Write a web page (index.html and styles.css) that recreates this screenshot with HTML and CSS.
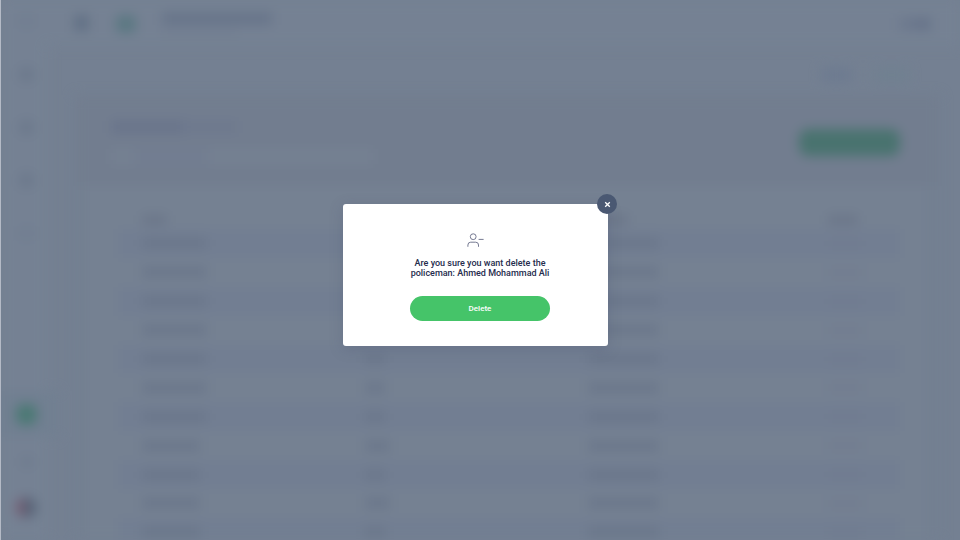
FILE: index.html
```
<!DOCTYPE html>
<html lang="en">
<head>
<meta charset="utf-8">
<title>Delete policeman</title>
<link rel="stylesheet" href="styles.css">
</head>
<body>
<div class="app" aria-hidden="true">
  <aside class="sidebar">
    <i class="dot faint"></i><i class="dot"></i><i class="dot"></i><i class="dot"></i><i class="dot faint"></i>
    <div class="active"><i class="dot green"></i></div>
    <i class="dot small"></i>
    <i class="avatar"></i>
  </aside>
  <main class="main">
    <header class="header">
      <i class="menu"></i><i class="logo"></i>
      <div class="brand"><i class="brand-name"></i><i class="brand-sub"></i></div>
      <i class="user"></i>
    </header>
    <div class="tabs"><i class="tab"></i><i class="tab pale"></i></div>
    <section class="panel">
      <div class="toolbar">
        <div class="heading"><i class="title"></i><i class="search"></i></div>
        <i class="add"></i>
      </div>
      <div class="card">
        <div class="row head"><i class="w25"></i><i class="w20"></i><i class="w40"></i><i class="w30"></i></div>
        <div class="row alt"><i class="w65"></i><i class="w20"></i><i class="w70"></i><i class="link"></i></div>
        <div class="row"><i class="w65"></i><i class="w20"></i><i class="w70"></i><i class="link"></i></div>
        <div class="row alt"><i class="w65"></i><i class="w20"></i><i class="w70"></i><i class="link"></i></div>
        <div class="row"><i class="w65"></i><i class="w20"></i><i class="w70"></i><i class="link"></i></div>
        <div class="row alt"><i class="w65"></i><i class="w20"></i><i class="w70"></i><i class="link"></i></div>
        <div class="row"><i class="w65"></i><i class="w20"></i><i class="w70"></i><i class="link"></i></div>
        <div class="row alt"><i class="w65"></i><i class="w20"></i><i class="w70"></i><i class="link"></i></div>
        <div class="row"><i class="w58"></i><i class="w25"></i><i class="w70"></i><i class="link"></i></div>
        <div class="row alt"><i class="w58"></i><i class="w20"></i><i class="w70"></i><i class="link"></i></div>
        <div class="row"><i class="w58"></i><i class="w25"></i><i class="w70"></i><i class="link"></i></div>
        <div class="row alt"><i class="w58"></i><i class="w20"></i><i class="w70"></i><i class="link"></i></div>
      </div>
    </section>
  </main>
</div>
<div class="overlay">
  <div class="modal" role="dialog" aria-modal="true">
    <button class="close" aria-label="Close"><svg width="7" height="7" viewBox="0 0 7 7"><path d="M1.2 1.2 5.8 5.8M5.8 1.2 1.2 5.8" fill="none" stroke="#fff" stroke-width="1.3"/></svg></button>
    <svg class="person" width="18" height="16" viewBox="0 0 18 16" fill="none" stroke="#767a92" stroke-width="1">
      <circle cx="6.2" cy="4.7" r="2.9"/>
      <path d="M.9 14.8V13Q.9 10.2 3.7 10.2H8.7Q11.5 10.2 11.5 13V14.8M11.6 7.4H16.6"/>
    </svg>
    <p class="message">Are you sure you want delete the<br>policeman: Ahmed Mohammad Ali</p>
    <button class="delete">Delete</button>
  </div>
</div>
</body>
</html>
```
FILE: styles.css
```
* { box-sizing: border-box; }
body {
  margin: 0;
  width: 960px;
  height: 540px;
  overflow: hidden;
  position: relative;
  background: #748092;
  font-family: Roboto, "Liberation Sans", sans-serif;
}
i { display: block; flex: none; }

/* Page behind the dialog */
.app {
  display: grid;
  grid-template-columns: 48px 1fr;
  height: 540px;
  overflow: hidden;
  filter: blur(6px);
}
.sidebar {
  display: flex;
  flex-direction: column;
  align-items: center;
  background: #758193;
  padding: 14px 0 0 5px;
}
.dot {
  width: 15px;
  height: 15px;
  border-radius: 5px;
  background: #6c798c;
  margin-bottom: 38px;
}
.dot.faint { background: #717e91; }
.active {
  display: flex;
  align-items: center;
  justify-content: center;
  align-self: stretch;
  height: 46px;
  margin: 112px -10px 0 -5px;
  padding-right: 5px;
  background: #717f91;
}
.dot.green {
  width: 21px;
  height: 21px;
  margin: 0;
  border-radius: 8px;
  background: #4b7974;
}
.dot.small {
  width: 12px;
  height: 12px;
  margin: 19px 0 29px;
  background: #6e7b8e;
}
.avatar {
  width: 21px;
  height: 21px;
  border-radius: 50%;
  background: linear-gradient(90deg, #78596f 30%, #596578 42%);
}
.main { overflow: hidden; }
.header {
  display: flex;
  align-items: center;
  height: 46px;
  padding: 0 30px 0 26px;
  background: #758193;
}
.menu { width: 15px; height: 16px; background: #627185; }
.logo {
  width: 20px;
  height: 18px;
  margin: 2px 0 0 27px;
  border-radius: 5px;
  background: #5b7882;
}
.brand { margin: 0 auto 0 26px; }
.brand-name { width: 110px; height: 13px; background: #68758a; }
.brand-sub { width: 75px; height: 5px; margin-top: 4px; background: #717d90; }
.user { width: 33px; height: 12px; margin-top: 2px; background: linear-gradient(90deg, #707c90, #637087); }
.tabs {
  display: flex;
  gap: 24px;
  height: 49px;
  padding: 22px 30px 0 774px;
}
.tab { width: 29px; height: 14px; background: #6d7a90; }
.tab.pale { width: 33px; background: #708090; }
.panel {
  margin: 0 20px 0 27px;
  height: 500px;
  background: linear-gradient(#727d8f 91px, #737f91 91px);
}
.toolbar {
  display: flex;
  align-items: center;
  justify-content: space-between;
  height: 91px;
  padding: 3px 40px 0 36px;
}
.title {
  width: 126px;
  height: 12px;
  background: linear-gradient(90deg, #69748b 55%, #6e798e 60%);
}
.search {
  width: 262px;
  height: 15px;
  margin-top: 16px;
  background: linear-gradient(90deg, #758192 8%, #727d91 10% 36%, #758192 38%);
}
.add { width: 101px; height: 27px; border-radius: 9px; background: #49736f; }
.card {
  margin: 0 15px 0 11px;
  padding: 18px 25px 0 32px;
  height: 400px;
  background: #758192;
}
.row {
  display: grid;
  grid-template-columns: 223px 223px 240px 1fr;
  align-items: center;
  height: 28.9px;
  padding-left: 24px;
}
.row.head { height: 25px; padding-top: 6px; }
.row.head i { background: #6b7689; }
.row.alt { background: #727e92; }
.row i { height: 10px; background: #6a768a; }
.row i.link { width: 34px; height: 9px; background: #727c90; }
.row.alt i.link { background: #707b90; }
.row .w20 { width: 20px; }
.row .w25 { width: 25px; }
.row .w30 { width: 30px; }
.row .w40 { width: 40px; }
.row .w58 { width: 58px; }
.row .w65 { width: 65px; }
.row .w70 { width: 71px; }

/* Dialog */
.overlay {
  position: absolute;
  inset: 0;
  display: flex;
  align-items: flex-start;
  justify-content: center;
  padding: 204px 10.5px 0 0;
  border-left: 1px solid #b4bac6;
}
.modal {
  position: relative;
  display: flex;
  flex-direction: column;
  align-items: center;
  width: 264.5px;
  height: 142px;
  padding: 28px 0 0 9.5px;
  border-radius: 3px;
  background: #fff;
  box-shadow: 0 3px 14px rgba(70, 80, 110, .25);
}
.close {
  position: absolute;
  top: -10px;
  right: -9.5px;
  display: flex;
  align-items: center;
  justify-content: center;
  width: 20px;
  height: 20px;
  padding: 0;
  border: 0;
  border-radius: 50%;
  background: #4a5872;
}
.person { margin-right: 9px; }
.message {
  margin: 10px 0 0;
  color: #252c4d;
  font-size: 9px;
  font-weight: 500;
  line-height: 10px;
  text-align: center;
  white-space: nowrap;
}
.delete {
  width: 140px;
  height: 25px;
  margin-top: 18px;
  padding: 0;
  border: 0;
  border-radius: 13px;
  background: #45c469;
  color: #fff;
  font: 500 8px/25px Roboto, "Liberation Sans", sans-serif;
}
```
